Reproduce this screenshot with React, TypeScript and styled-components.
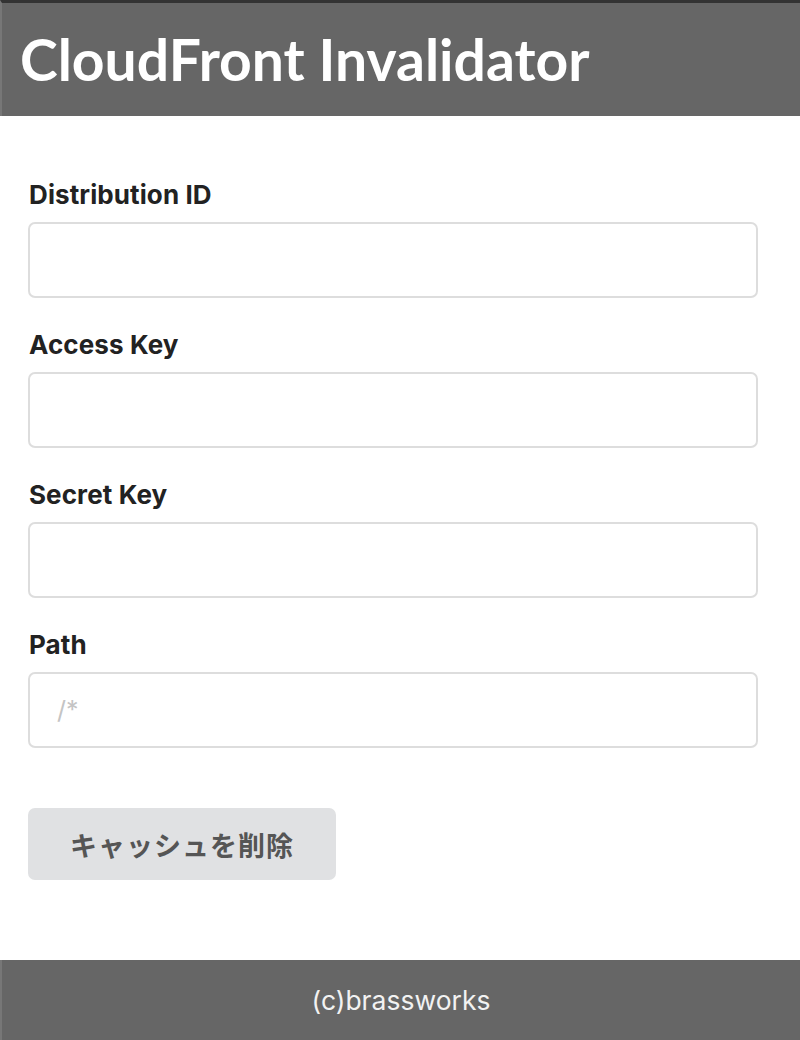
import React from "react";
import styled, { createGlobalStyle } from "styled-components";

const Global = createGlobalStyle`
  html, body { margin: 0; padding: 0; background: #fff; }
  body { font-family: Inter, "Noto Sans CJK JP", sans-serif; }
`;

const Page = styled.div`
  display: flex;
  flex-direction: column;
  min-height: 1040px;
`;

const Header = styled.header`
  background: #666;
  border-top: 3px solid #333;
  border-left: 2px solid #777;
  height: 116px;
  display: flex;
  align-items: center;
  padding-left: 18px;
  box-sizing: border-box;
`;

const Title = styled.h1`
  margin: 0;
  font-family: Lato, sans-serif;
  font-weight: 700;
  font-size: 57px;
  color: #fff;
  line-height: 1;
  padding-bottom: 0;
`;

const Main = styled.main`
  flex: 1;
  padding: 64px 42px 0 28px;
  display: flex;
  flex-direction: column;
`;

const Field = styled.div`
  display: flex;
  flex-direction: column;
  margin-bottom: 32px;
`;

const Label = styled.label`
  font-family: Inter, "Noto Sans CJK JP", sans-serif;
  font-weight: 700;
  font-size: 26px;
  letter-spacing: 0.1px;
  line-height: 30px;
  color: #222;
  margin-left: 1px;
  margin-bottom: 12px;
`;

const Input = styled.input`
  height: 76px;
  box-sizing: border-box;
  border: 2px solid #ddd;
  border-radius: 7px;
  padding: 0 27px;
  font-family: Inter, sans-serif;
  font-size: 25px;
  color: #333;
  outline: none;
  &::placeholder { color: #c4c4c4; }
`;

const Button = styled.button`
  align-self: flex-start;
  margin-top: 28px;
  width: 308px;
  height: 72px;
  border: none;
  border-radius: 7px;
  background: #e0e1e3;
  color: #555;
  font-family: "Noto Sans CJK JP", sans-serif;
  font-weight: 700;
  font-size: 27px;
  letter-spacing: 1px;
  cursor: pointer;
`;

const Footer = styled.footer`
  margin-top: 80px;
  height: 80px;
  background: #666;
  border-left: 2px solid #777;
  box-sizing: border-box;
  display: flex;
  align-items: center;
  justify-content: center;
  color: #f2f2f2;
  font-family: Inter, sans-serif;
  font-size: 26.5px;
`;

const fields = [
  { label: "Distribution ID", placeholder: "" },
  { label: "Access Key", placeholder: "" },
  { label: "Secret Key", placeholder: "" },
  { label: "Path", placeholder: "/*" },
];

export default function App() {
  return (
    <Page>
      <Global />
      <Header>
        <Title>CloudFront Invalidator</Title>
      </Header>
      <Main>
        {fields.map((f) => (
          <Field key={f.label}>
            <Label>{f.label}</Label>
            <Input placeholder={f.placeholder} />
          </Field>
        ))}
        <Button>キャッシュを削除</Button>
      </Main>
      <Footer>(c)brassworks</Footer>
    </Page>
  );
}
